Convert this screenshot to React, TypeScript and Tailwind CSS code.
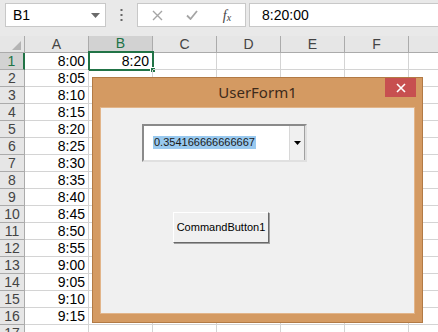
import React from "react";

const times = [
  "8:00","8:05","8:10","8:15","8:20","8:25","8:30","8:35","8:40","8:45","8:50","8:55","9:00","9:05","9:10","9:15","",
];
const cols = ["A", "B", "C", "D", "E", "F", "G"];

export default function App() {
  return (
    <div
      className="relative w-[438px] h-[332px] overflow-hidden bg-white text-black"
      style={{ fontFamily: '"Liberation Sans", Arial, sans-serif' }}
    >
      {/* top formula bar */}
      <div className="h-[36px] bg-[#e9e9e9] flex items-start pt-[3px] pl-[5px]">
        <div className="w-[101px] h-[24px] bg-white border border-[#c8c8c8] flex items-center pl-[7px] pr-[5px] text-[14px]">
          <span className="flex-1">B1</span>
          <svg width="9" height="5" viewBox="0 0 9 5">
            <path d="M0 0h9L4.5 5z" fill="#6a6a6a" />
          </svg>
        </div>
        <div className="w-[31px] h-[24px] flex items-center justify-center">
          <svg width="3" height="12" viewBox="0 0 3 12">
            <rect x="0.5" y="0" width="2" height="2" fill="#666" />
            <rect x="0.5" y="5" width="2" height="2" fill="#666" />
            <rect x="0.5" y="10" width="2" height="2" fill="#666" />
          </svg>
        </div>
        <div className="w-[109px] h-[24px] bg-white border border-[#c8c8c8] flex items-center">
          <div className="w-[37px] flex justify-center pl-[2px]">
            <svg width="11" height="11" viewBox="0 0 11 11">
              <path d="M1 1L10 10M10 1L1 10" stroke="#a5a5a5" strokeWidth="1.4" />
            </svg>
          </div>
          <div className="w-[34px] flex justify-center">
            <svg width="12" height="10" viewBox="0 0 12 10">
              <path d="M1 5.5L4.5 9L11 1" stroke="#a5a5a5" strokeWidth="1.8" fill="none" />
            </svg>
          </div>
          <div
            className="w-[36px] flex justify-center text-[14px] italic text-[#444]"
            style={{ fontFamily: '"Liberation Serif", "Times New Roman", serif' }}
          >
            f<span className="text-[10px] mt-[5px]">x</span>
          </div>
        </div>
        <div className="ml-[3px] flex-1 h-[24px] bg-white border border-[#c8c8c8] border-r-0 flex items-center pl-[12px] text-[14px]">
          8:20:00
        </div>
      </div>

      {/* grid */}
      <div className="flex flex-col">
        {/* header row */}
        <div className="flex h-[17px]">
          <div className="w-[25px] h-[17px] shrink-0 bg-[#e6e6e6] border-r border-b border-[#ababab] flex items-end justify-end pr-[3px] pb-[2px]">
            <svg width="9" height="9" viewBox="0 0 9 9">
              <path d="M9 0V9H0z" fill="#b4b4b4" />
            </svg>
          </div>
          {cols.map((c) => (
            <div
              key={c}
              className={
                c === "B"
                  ? "w-[64px] shrink-0 h-[17px] bg-[#d2d2d2] border-r border-[#ababab] border-b-2 border-b-[#217346] text-[#217346] text-[14px] leading-[15px] text-center"
                  : "w-[64px] shrink-0 h-[17px] bg-[#e6e6e6] border-r border-b border-[#ababab] text-[#444] text-[14px] leading-[16px] text-center"
              }
            >
              {c === "G" ? "" : c}
            </div>
          ))}
        </div>
        {times.map((t, i) => (
          <div key={i} className="flex h-[17px]">
            <div
              className={
                i === 0
                  ? "w-[25px] h-[17px] shrink-0 bg-[#d2d2d2] border-r-2 border-r-[#217346] border-b border-[#ababab] text-[14px] leading-[16px] text-center text-[#217346]"
                  : "w-[25px] h-[17px] shrink-0 bg-[#e6e6e6] border-r border-b border-[#ababab] text-[14px] leading-[16px] text-center text-[#444]"
              }
            >
              {i + 1}
            </div>
            {cols.map((c) => (
              <div
                key={c}
                className="relative w-[64px] shrink-0 h-[17px] border-r border-b border-[#d4d4d4] text-[14px] leading-[16px] text-right pr-[3px]"
              >
                {c === "A" ? t : c === "B" && i === 0 ? "8:20" : ""}
                {c === "B" && i === 0 && (
                  <>
                    <div className="absolute left-[-1px] top-[-2px] w-[66px] h-[20px] border-2 border-[#217346]" />
                    <div className="absolute right-[-4px] bottom-[-4px] w-[6px] h-[6px] bg-[#217346] border border-white" />
                  </>
                )}
              </div>
            ))}
          </div>
        ))}
      </div>

      {/* UserForm */}
      <div className="absolute left-[92px] top-[77px] w-[331px] h-[246px] bg-[#d49a62] border border-[#b27a45] flex flex-col">
        <div className="relative h-[29px] shrink-0 flex items-center justify-center">
          <span
            className="text-[15px] text-[#3d2a1a]"
            style={{ fontFamily: '"Noto Sans", "Open Sans", sans-serif' }}
          >
            UserForm1
          </span>
          <div className="absolute right-[6px] top-0 w-[31px] h-[19px] bg-[#c75050] flex items-center justify-center">
            <svg width="10" height="10" viewBox="0 0 10 10">
              <path d="M1 1L9 9M9 1L1 9" stroke="white" strokeWidth="1.6" />
            </svg>
          </div>
        </div>
        <div className="relative mx-[7px] mb-[8px] flex-1 bg-[#f0f0f0] border border-[#e2b58a]">
          {/* ComboBox */}
          <div className="absolute left-[41px] top-[16px] w-[165px] h-[38px] bg-white border-2 border-t-[#8a8a8a] border-l-[#8a8a8a] border-r-[#e0e0e0] border-b-[#e0e0e0] flex">
            <div className="flex-1 pl-[9px] pt-[3px]">
              <span className="bg-[#99c9ef] text-[11px] leading-[13px] text-[#1a1a1a] inline-block px-[1px]">
                0.354166666666667
              </span>
            </div>
            <div className="w-[16px] h-full bg-[#f0f0f0] border-l border-[#d8d8d8] border-r border-r-[#a0a0a0] flex items-center justify-center">
              <svg width="7" height="4" viewBox="0 0 7 4">
                <path d="M0 0h7L3.5 4z" fill="#000" />
              </svg>
            </div>
          </div>
          {/* CommandButton */}
          <div className="absolute left-[72px] top-[104px] w-[96px] h-[31px] bg-[#f0f0f0] border border-t-white border-l-white border-r-[#696969] border-b-[#696969] shadow-[1px_1px_0_#a0a0a0] flex items-center justify-center text-[11px] text-black">
            CommandButton1
          </div>
        </div>
      </div>
    </div>
  );
}
